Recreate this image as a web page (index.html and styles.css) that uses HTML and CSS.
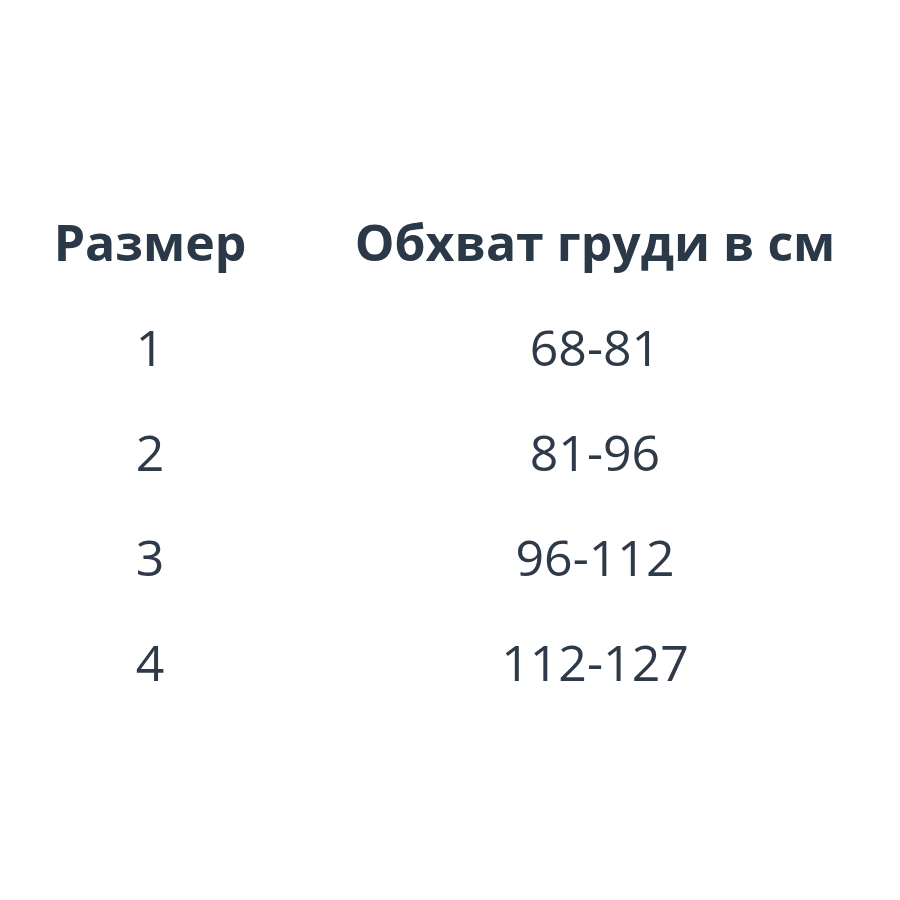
FILE: index.html
```html
<!DOCTYPE html>
<html lang="ru">
<head>
<meta charset="utf-8">
<link rel="stylesheet" href="styles.css">
</head>
<body>
<div class="table">
  <div class="cell head">Размер</div>
  <div class="cell head">Обхват груди в см</div>
  <div class="cell">1</div>
  <div class="cell">68-81</div>
  <div class="cell">2</div>
  <div class="cell">81-96</div>
  <div class="cell">3</div>
  <div class="cell">96-112</div>
  <div class="cell">4</div>
  <div class="cell">112-127</div>
</div>
</body>
</html>
```
FILE: styles.css
```css
html, body {
  margin: 0;
  padding: 0;
  background: #ffffff;
}
body {
  width: 900px;
  height: 900px;
  font-family: "Open Sans", "Liberation Sans", sans-serif;
  color: #2b3847;
}
.table {
  display: grid;
  grid-template-columns: 300px 590px;
  padding-top: 190px;
}
.cell {
  text-align: center;
  font-size: 50px;
  line-height: 105px;
  font-weight: 400;
  color: #2e3a48;
}
.head {
  font-weight: 700;
  color: #2b3847;
}
```
